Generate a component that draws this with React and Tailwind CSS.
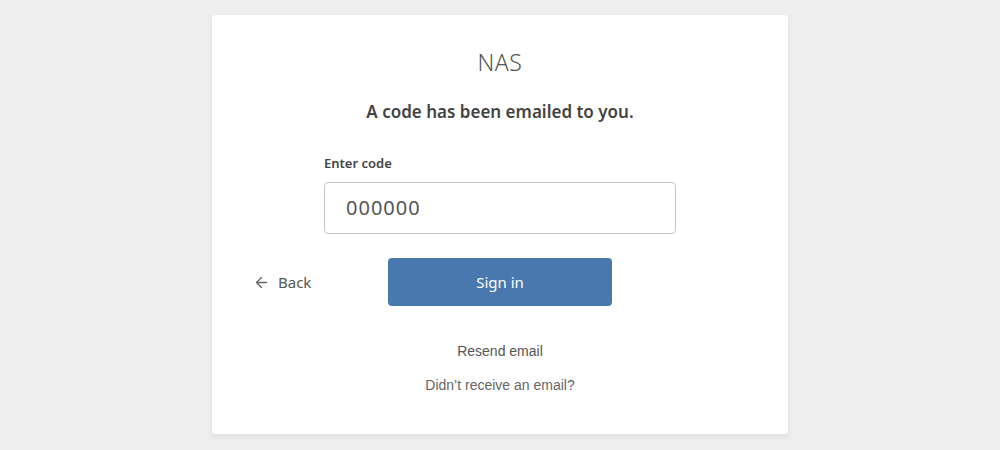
import { ArrowLeft } from "lucide-react";

export default function App() {
  return (
    <div className="min-h-[450px] w-full bg-[#eeeeee] pt-[15px] font-['Noto_Sans','Open_Sans',sans-serif]">
      <div className="mx-auto w-[576px] h-[419px] bg-white rounded-[4px] shadow-[0_3px_3px_2px_#e6e6e6] flex flex-col items-center">
        <h1 className="mt-[31px] text-[23px] leading-[32px] font-light text-[#555] tracking-[0.5px]">NAS</h1>
        <p className="mt-[22px] text-[17px] leading-[24px] font-semibold text-[#444]">A code has been emailed to you.</p>

        <div className="mt-[30px] w-[352px]">
          <label className="block text-[13px] leading-[18px] font-semibold text-[#444]">Enter code</label>
          <div className="mt-[10px] h-[52px] rounded-[4px] border border-[#c8c8c8] flex items-center px-[21px]">
            <span className="text-[20px] text-[#555] tracking-[1px]">000000</span>
          </div>
        </div>

        <div className="mt-[24px] w-full grid grid-cols-[1fr_224px_1fr] items-center">
          <button className="flex items-center gap-[8px] pl-[41px] text-[15px] text-[#555]">
            <ArrowLeft size={17} strokeWidth={1.9} className="text-[#666]" />
            <span>Back</span>
          </button>
          <button className="h-[48px] rounded-[4px] bg-[#4878ad] text-white text-[15px]">Sign in</button>
          <div />
        </div>

        <p className="mt-[35px] text-[14px] leading-[20px] text-[#555] font-['Liberation_Sans',Arial,sans-serif]">Resend email</p>
        <p className="mt-[14px] text-[14px] leading-[20px] text-[#666] font-['Liberation_Sans',Arial,sans-serif]">Didn’t receive an email?</p>
      </div>
    </div>
  );
}
